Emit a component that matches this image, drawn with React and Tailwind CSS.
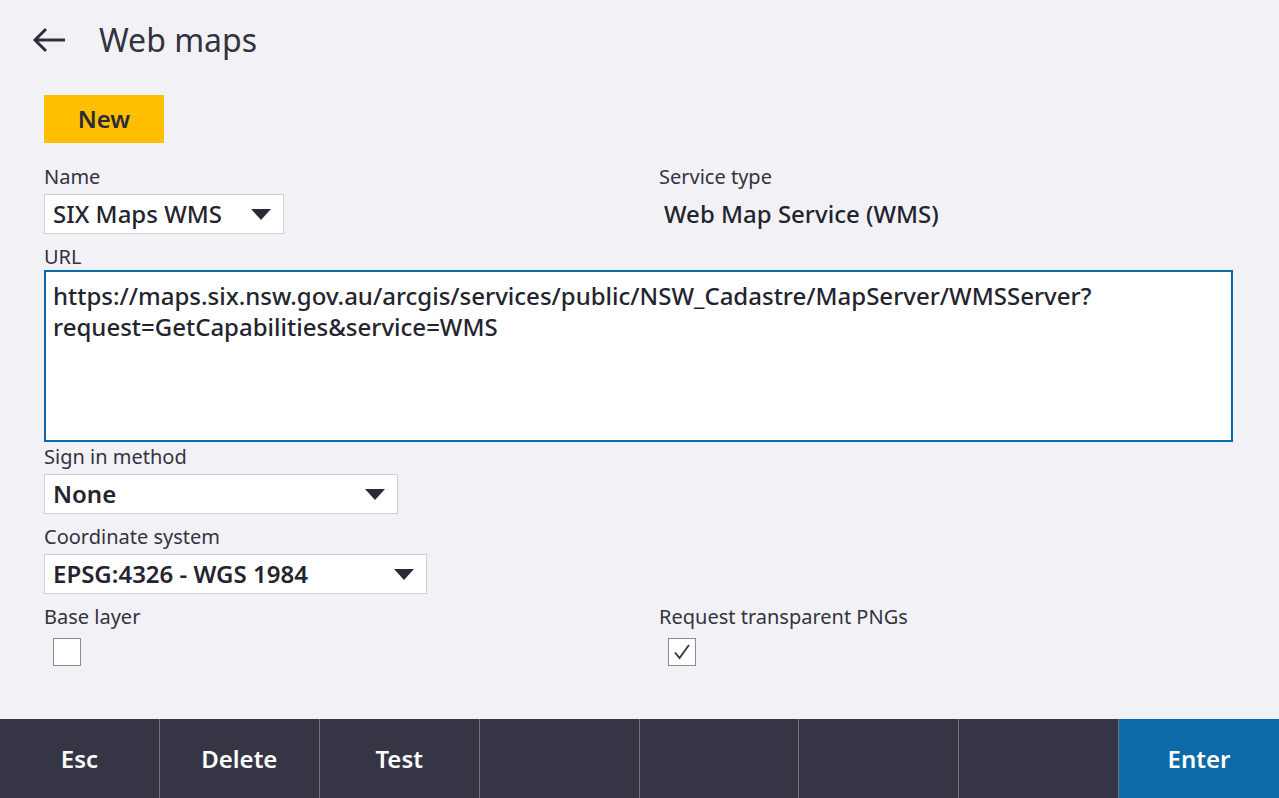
import React from "react";

const font = { fontFamily: '"Noto Sans", "Open Sans", sans-serif' };

function Caret() {
  return (
    <svg width="20" height="11" viewBox="0 0 20 11" className="shrink-0">
      <polygon points="0,0 20,0 10,11" fill="#2a2a36" />
    </svg>
  );
}

function Select({ value, width, weight }) {
  return (
    <div
      className={`h-[40px] bg-white border border-[#cfcfd4] flex items-center justify-between pl-[8px] pr-[12px] ${width}`}
    >
      <span className={`text-[24px] text-[#24242f] leading-none ${weight}`}>{value}</span>
      <Caret />
    </div>
  );
}

function Label({ children }) {
  return <div className="h-[26px] leading-[26px] text-[20px] text-[#33333f]">{children}</div>;
}

function Checkbox({ checked }) {
  return (
    <div className="w-[28px] h-[28px] bg-white border border-[#8a8a90] flex items-center justify-center">
      {checked && (
        <svg width="18" height="18" viewBox="0 0 18 18">
          <polyline points="2,9.5 6.5,15 16,2" fill="none" stroke="#33333f" strokeWidth="1.8" />
        </svg>
      )}
    </div>
  );
}

export default function App() {
  const cells = ["Esc", "Delete", "Test", "", "", "", ""];
  return (
    <div className="w-[1279px] h-[798px] bg-[#f2f2f6] flex flex-col overflow-hidden" style={font}>
      <div className="flex-1 flex flex-col">
        <div className="h-[80px] flex items-center pl-[31px]">
          <svg width="36" height="28" viewBox="0 0 36 28" className="mt-[-1px]">
            <path d="M34 14 H4 M15 3 L4 14 L15 25" fill="none" stroke="#2e2e3a" strokeWidth="3" />
          </svg>
          <span className="ml-[32px] text-[32px] text-[#33333f] leading-none">Web maps</span>
        </div>
        <div className="px-[44px] pt-[15px]">
          <button className="w-[120px] h-[48px] bg-[#ffbf00] text-[24px] font-semibold text-[#2b2b33]">
            New
          </button>
          <div className="grid grid-cols-[615px_1fr] mt-[21px]">
            <div>
              <Label>Name</Label>
              <div className="mt-[4px]">
                <Select value="SIX Maps WMS" width="w-[240px]" weight="font-medium" />
              </div>
            </div>
            <div>
              <Label>Service type</Label>
              <div className="mt-[4px] h-[40px] flex items-center pl-[5px] text-[24px] font-medium text-[#24242f]">
                Web Map Service (WMS)
              </div>
            </div>
          </div>
          <div className="mt-[10px]">
            <Label>URL</Label>
            <div className="h-[172px] w-[1189px] bg-white border-2 border-[#0d68a8] px-[7px] pt-[8px] text-[24px] font-medium text-[#24242f] leading-[31px]">
              https://maps.six.nsw.gov.au/arcgis/services/public/NSW_Cadastre/MapServer/WMSServer?
              <br />
              request=GetCapabilities&amp;service=WMS
            </div>
          </div>
          <div className="mt-[2px]">
            <Label>Sign in method</Label>
            <div className="mt-[4px]">
              <Select value="None" width="w-[354px]" weight="font-semibold" />
            </div>
          </div>
          <div className="mt-[10px]">
            <Label>Coordinate system</Label>
            <div className="mt-[4px]">
              <Select value="EPSG:4326 - WGS 1984" width="w-[383px]" weight="font-semibold" />
            </div>
          </div>
          <div className="grid grid-cols-[615px_1fr] mt-[10px]">
            <div>
              <Label>Base layer</Label>
              <div className="mt-[8px] ml-[9px]">
                <Checkbox />
              </div>
            </div>
            <div>
              <Label>Request transparent PNGs</Label>
              <div className="mt-[8px] ml-[9px]">
                <Checkbox checked />
              </div>
            </div>
          </div>
        </div>
      </div>
      <div className="h-[79px] bg-[#363545] grid grid-cols-8">
        {cells.map((c, i) => (
          <div
            key={i}
            className="flex items-center justify-center text-[24px] font-semibold text-white border-r border-[#74737e]"
          >
            {c}
          </div>
        ))}
        <div className="flex items-center justify-center text-[24px] font-semibold text-white bg-[#0d69a8]">
          Enter
        </div>
      </div>
    </div>
  );
}
